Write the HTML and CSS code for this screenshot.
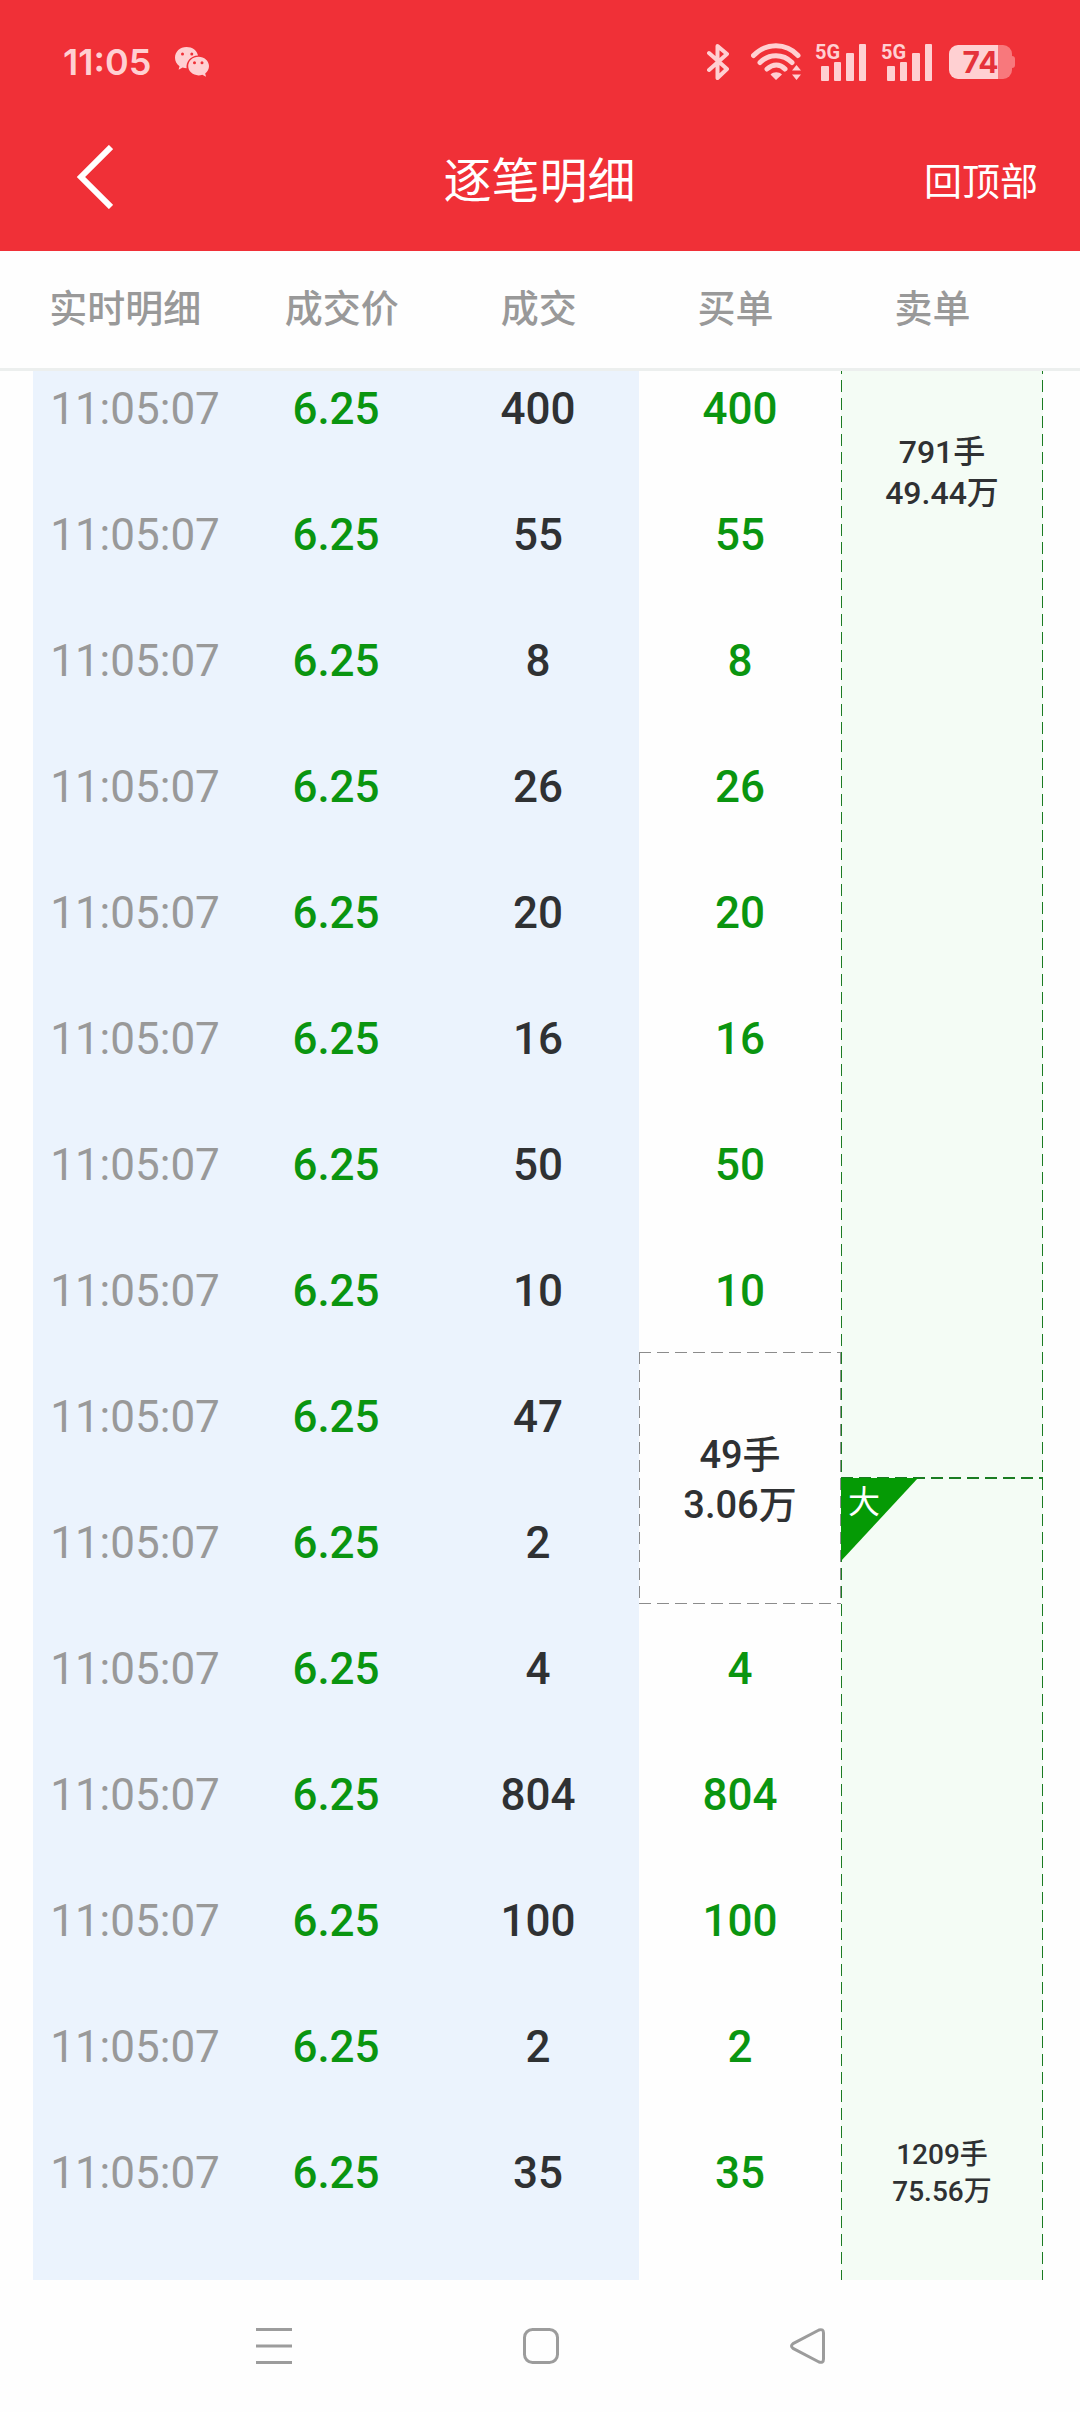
FILE: index.html
```html
<!DOCTYPE html>
<html lang="zh-CN">
<head>
<meta charset="utf-8">
<meta name="viewport" content="width=device-width, initial-scale=1">
<title>逐笔明细</title>
<link rel="stylesheet" href="styles.css">
</head>
<body>
<div class="app">
  <div class="status">
    <span class="clock">11:05</span>
    <svg class="wechat" width="34" height="30" viewBox="0 0 34 30" fill="currentColor">
      <path fill-rule="evenodd" d="M11.500 0C5 0 0 4.700 0 10.700c0 3.600 1.700 6.500 4.500 8.500l-.9 3.600 4-2.200c1.500.5 2.700.6 4 .6-.9-6.500 4-12.500 11.400-12.800C22 3.500 17.300 0 11.500 0zM7.500 5.600a1.500 1.500 0 1 1 0 3 1.500 1.500 0 0 1 0-3zm9.300 0a1.500 1.500 0 1 1 0 3 1.500 1.500 0 0 1 0-3z"/>
      <path fill-rule="evenodd" d="M23.500 9.800c-5.800 0-10.300 4.100-10.300 9.300s4.600 9.300 10.300 9.300c1.400 0 2.600-.2 3.800-.6l3.700 2-.8-3.200c2.300-1.700 3.800-4.300 3.800-7.500 0-5.200-4.800-9.300-10.500-9.300zM19.500 14.300a1.500 1.500 0 1 1 0 3 1.500 1.500 0 0 1 0-3zm7.500 0a1.500 1.500 0 1 1 0 3 1.500 1.500 0 0 1 0-3z"/>
    </svg>
    <div class="indicators">
      <svg width="22" height="38" viewBox="0 0 22 38" fill="none" stroke="currentColor" stroke-width="4" stroke-linejoin="round" stroke-linecap="round">
        <path d="M2 10l18 16-9.500 9V3l9.500 8L2 27"/>
      </svg>
      <svg class="wifi" width="52" height="38" viewBox="0 0 52 38" fill="none" stroke="currentColor" stroke-width="5" stroke-linecap="round">
        <path d="M2.500 12.500C15-.5 35-.5 47 12.500M9 19.500c9-9 23-9 32 0M16 26c6-5.500 13-5.500 18 0"/>
        <path d="M19.500 31.500c3-3 8.500-3 11.500 0L25 37zM41 27.500h9l-4.500-5.500zM41 31.500h9L45.500 37z" fill="currentColor" stroke="none"/>
      </svg>
      <span class="signal"><b>5G</b>
        <svg width="46" height="37" viewBox="0 0 46 37" fill="currentColor"><rect y="22" width="8" height="15" rx="1"/><rect x="13" y="18" width="7" height="19" rx="1"/><rect x="25" y="9" width="8" height="28" rx="1"/><rect x="38" width="7" height="37" rx="1"/></svg>
      </span>
      <span class="signal"><b>5G</b>
        <svg width="46" height="37" viewBox="0 0 46 37" fill="currentColor"><rect y="22" width="8" height="15" rx="1"/><rect x="13" y="18" width="7" height="19" rx="1"/><rect x="25" y="9" width="8" height="28" rx="1"/><rect x="38" width="7" height="37" rx="1"/></svg>
      </span>
      <span class="battery"><span class="level">74</span></span>
    </div>
  </div>

  <header class="bar">
    <button class="back" aria-label="返回">
      <svg width="38" height="64" viewBox="0 0 38 64" fill="none" stroke="currentColor" stroke-width="6"><path d="M36 2L6 32l30 30"/></svg>
    </button>
    <h1 class="title">逐笔明细</h1>
    <button class="to-top">回顶部</button>
  </header>

  <div class="columns">
    <span>实时明细</span><span>成交价</span><span>成交</span><span>买单</span><span>卖单</span>
  </div>

  <main class="viewport">
    <table class="ticks" aria-label="逐笔明细">
      <tbody>
        <tr><td class="time">11:05:07</td><td class="price">6.25</td><td class="vol">400</td><td class="buy">400</td><td class="order sell first" rowspan="9">791手<br>49.44万</td></tr>
        <tr><td class="time">11:05:07</td><td class="price">6.25</td><td class="vol">55</td><td class="buy">55</td></tr>
        <tr><td class="time">11:05:07</td><td class="price">6.25</td><td class="vol">8</td><td class="buy">8</td></tr>
        <tr><td class="time">11:05:07</td><td class="price">6.25</td><td class="vol">26</td><td class="buy">26</td></tr>
        <tr><td class="time">11:05:07</td><td class="price">6.25</td><td class="vol">20</td><td class="buy">20</td></tr>
        <tr><td class="time">11:05:07</td><td class="price">6.25</td><td class="vol">16</td><td class="buy">16</td></tr>
        <tr><td class="time">11:05:07</td><td class="price">6.25</td><td class="vol">50</td><td class="buy">50</td></tr>
        <tr><td class="time">11:05:07</td><td class="price">6.25</td><td class="vol">10</td><td class="buy">10</td></tr>
        <tr><td class="time">11:05:07</td><td class="price">6.25</td><td class="vol">47</td><td class="order merged" rowspan="2">49手<br>3.06万</td></tr>
        <tr><td class="time">11:05:07</td><td class="price">6.25</td><td class="vol">2</td><td class="order sell second" rowspan="7"><span class="flag">大</span>1209手<br>75.56万</td></tr>
        <tr><td class="time">11:05:07</td><td class="price">6.25</td><td class="vol">4</td><td class="buy">4</td></tr>
        <tr><td class="time">11:05:07</td><td class="price">6.25</td><td class="vol">804</td><td class="buy">804</td></tr>
        <tr><td class="time">11:05:07</td><td class="price">6.25</td><td class="vol">100</td><td class="buy">100</td></tr>
        <tr><td class="time">11:05:07</td><td class="price">6.25</td><td class="vol">2</td><td class="buy">2</td></tr>
        <tr><td class="time">11:05:07</td><td class="price">6.25</td><td class="vol">35</td><td class="buy">35</td></tr>
        <tr><td class="time"></td><td class="price"></td><td class="vol"></td><td class="buy"></td></tr>
      </tbody>
    </table>
  </main>

  <nav class="system">
    <button aria-label="最近任务"><svg width="36" height="36" viewBox="0 0 36 36" fill="none" stroke="currentColor" stroke-width="3"><path d="M0 1.500h36M0 18h36M0 34.500h36"/></svg></button>
    <button aria-label="主屏幕"><svg width="36" height="36" viewBox="0 0 36 36" fill="none" stroke="currentColor" stroke-width="3"><rect x="1.500" y="1.500" width="33" height="33" rx="8"/></svg></button>
    <button aria-label="后退"><svg width="36" height="36" viewBox="0 0 36 36" fill="none" stroke="currentColor" stroke-width="3" stroke-linejoin="round"><path d="M3 15.600L29 2q4.500-1.500 4.500 3v26q0 4.500-4.500 3L3 20.400q-3-2.400 0-4.800z"/></svg></button>
  </nav>
</div>
</body>
</html>
```
FILE: styles.css
```css
* {
  box-sizing: border-box;
}

body {
  margin: 0;
  background: #fefefe;
  font-family: Roboto, "Noto Sans CJK SC", sans-serif;
}

button {
  padding: 0;
  border: 0;
  background: none;
  color: inherit;
  font: inherit;
}

svg {
  display: block;
}

.app {
  display: flex;
  flex-direction: column;
  height: 100vh;
}

/* Status bar */
.status {
  display: flex;
  align-items: center;
  flex: none;
  height: 110px;
  padding: 14px 65px 0 63px;
  background: #f03037;
  color: #ffd0d2;
}

.clock {
  font: 600 36px/48px Inter, sans-serif;
}

.wechat {
  margin-left: 24px;
}

.indicators {
  display: flex;
  align-items: center;
  gap: 20px;
  margin-left: auto;
}

.wifi {
  margin-left: 2px;
}

.signal {
  position: relative;
  padding-left: 6px;
}

.signal + .signal {
  margin-left: -6px;
}

.signal:first-of-type {
  margin-left: -8px;
}

.signal b {
  position: absolute;
  top: -2px;
  left: 0;
  font-size: 20px;
  line-height: 20px;
}

.battery {
  position: relative;
  width: 63px;
  height: 34px;
  margin: 0 3px 0 -4px;
  border-radius: 9px;
  background: linear-gradient(90deg, #ffd0d2 49px, #f8787c 49px);
}

.battery::after {
  content: "";
  position: absolute;
  top: 11px;
  right: -3px;
  width: 3px;
  height: 12px;
  border-radius: 0 3px 3px 0;
  background: #f8787c;
}

.level {
  display: block;
  text-align: center;
  color: #e5323a;
  font: 700 30px/34px Inter, sans-serif;
}

/* Title bar */
.bar {
  display: grid;
  grid-template-columns: 1fr auto 1fr;
  align-items: center;
  flex: none;
  height: 141px;
  padding: 2px 42px 0 75px;
  background: #f03037;
  color: #fff;
}

.back {
  justify-self: start;
  margin-bottom: 10px;
}

.title {
  margin: 0 0 0 -34px;
  font-size: 48px;
  font-weight: 400;
  line-height: 64px;
}

.to-top {
  justify-self: end;
  font-size: 38px;
  line-height: 48px;
}

/* Column headings */
.columns {
  display: grid;
  grid-template-columns: 6fr 5fr 5fr 5fr 5fr;
  align-items: center;
  flex: none;
  height: 120px;
  padding: 0 49px 2px 7px;
  border-bottom: 3px solid #ecefee;
  color: #999;
  font-size: 38px;
  font-weight: 500;
  line-height: 48px;
  text-align: center;
}

/* Tick list, scrolled part of a row down */
.viewport {
  flex: 1;
  min-height: 0;
  padding: 0 37px 0 33px;
  overflow: hidden;
}

.ticks {
  width: 100%;
  margin-top: -27px;
  border-collapse: collapse;
  table-layout: fixed;
  text-align: center;
  font-size: 44px;
  font-weight: 500;
}

.ticks td {
  height: 126px;
  padding: 4px 0 0;
}

.ticks .time,
.ticks .price,
.ticks .vol {
  background: #ebf3fd;
}

.ticks .time {
  padding-left: 2px;
  color: #999;
  font-weight: 400;
}

.ticks .price,
.ticks .buy {
  color: #0a9510;
}

.ticks .vol,
.ticks .order {
  color: #2f3133;
}

/* Dashed outlines of merged orders */
.order {
  --dash: #8c8c8c;
  --across: repeating-linear-gradient(90deg, var(--dash) 0 12px, transparent 12px 18px);
  --down: repeating-linear-gradient(180deg, var(--dash) 0 12px, transparent 12px 18px);
  background:
    var(--across) top / 100% 1px no-repeat,
    var(--across) bottom / 100% 1px no-repeat,
    var(--down) left / 1px 100% no-repeat,
    var(--down) right / 1px 100% no-repeat;
}

.merged {
  font-size: 38px;
  line-height: 50px;
}

.sell {
  --dash: #1a7c22;
  position: relative;
  background-color: #f4fcf5;
}

.ticks .first {
  padding-top: 88px;
  vertical-align: top;
  font-size: 32px;
  line-height: 41px;
}

.ticks .second {
  padding-bottom: 150px;
  vertical-align: bottom;
  font-size: 28px;
  line-height: 37px;
}

.flag {
  position: absolute;
  top: 0;
  left: 0;
  width: 77px;
  height: 83px;
  padding: 4px 0 0 7px;
  background: #059a05;
  clip-path: polygon(0 0, 100% 0, 0 100%);
  color: #fff;
  font-size: 32px;
  font-weight: 400;
  line-height: 41px;
  text-align: left;
}

/* System navigation */
.system {
  display: grid;
  grid-template-columns: repeat(3, 1fr);
  place-items: center;
  flex: none;
  height: 132px;
  padding: 0 139px 0 141px;
  color: #9c9c9c;
}
```
